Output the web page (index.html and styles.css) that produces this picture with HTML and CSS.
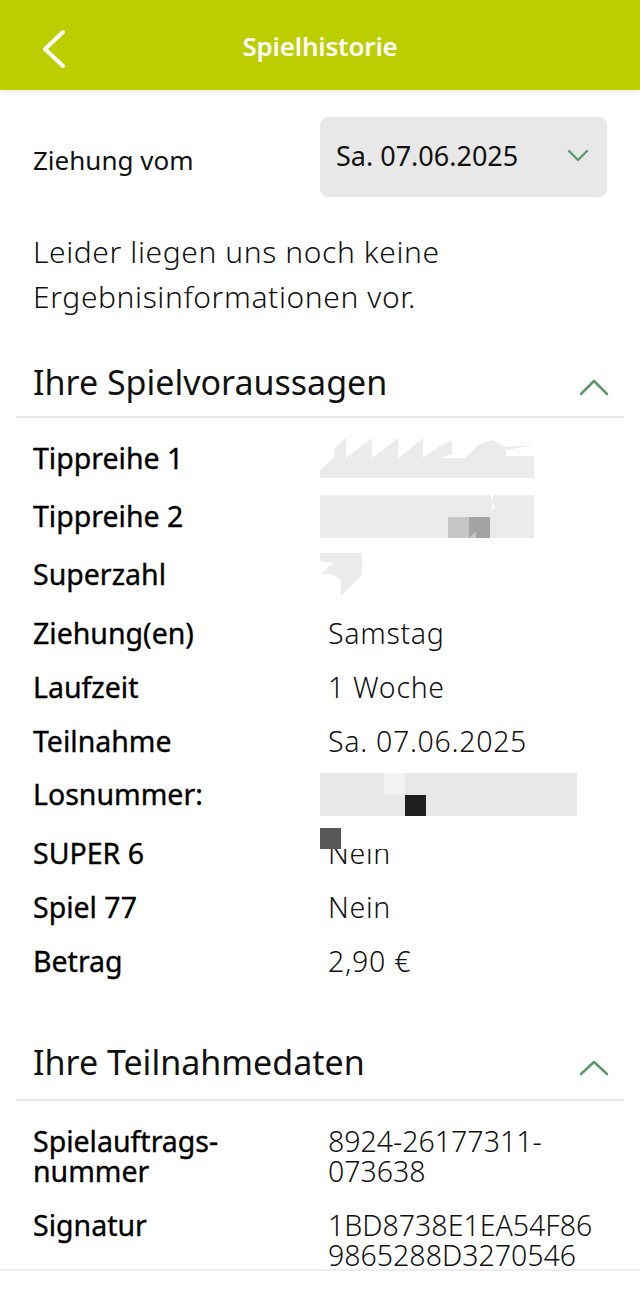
FILE: index.html
```html
<!DOCTYPE html>
<html lang="de">
<head>
<meta charset="utf-8">
<title>Spielhistorie</title>
<link rel="stylesheet" href="styles.css">
</head>
<body>
<header class="appbar">
  <svg class="back" width="40" height="50" viewBox="0 0 40 50"><polyline points="28,7 10,24 28,41" fill="none" stroke="#fff" stroke-width="4" stroke-linecap="round" stroke-linejoin="round"/></svg>
  <h1 class="title">Spielhistorie</h1>
</header>
<main class="content">
  <div class="draw-row">
    <span class="draw-label">Ziehung vom</span>
    <div class="select">
      <span class="select-text">Sa. 07.06.2025</span>
      <svg class="select-chev" width="22" height="14" viewBox="0 0 22 14"><polyline points="2,2 11,11 20,2" fill="none" stroke="#5b9a6b" stroke-width="2.4" stroke-linecap="round" stroke-linejoin="round"/></svg>
    </div>
  </div>
  <p class="notice">Leider liegen uns noch keine Ergebnisinformationen vor.</p>

  <section class="section">
    <div class="section-head">
      <h2 class="section-title">Ihre Spielvoraussagen</h2>
      <svg class="section-chev" width="30" height="18" viewBox="0 0 30 18"><polyline points="2,15 15,2 28,15" fill="none" stroke="#5b9a6b" stroke-width="2.6" stroke-linecap="round" stroke-linejoin="round"/></svg>
    </div>
    <div class="grid">
      <div class="row tall">
        <span class="label">Tippreihe 1</span>
        <span class="value redact">
          <svg width="214" height="40" viewBox="0 0 214 40"><path fill="#ebebeb" d="M0,40 L0,32 L14,20 L14,11 L26,0 L26,20 L38,11 L52,0 L52,20 L64,11 L78,0 L78,20 L90,11 L103,0 L103,20 L115,11 L132,2 L132,16 L120,20 L145,20 L160,6 L172,2 L186,9 L214,7 L186,12 L186,18 L214,18 L214,40 Z"/></svg>
        </span>
      </div>
      <div class="row tall">
        <span class="label">Tippreihe 2</span>
        <span class="value redact">
          <svg width="214" height="43" viewBox="0 0 214 43"><rect width="214" height="43" fill="#ebebeb"/><path fill="#fff" d="M170,0 L175,12 L172,16 L173,0 Z"/><rect x="128" y="22" width="21" height="21" fill="#c6c6c6"/><rect x="149" y="22" width="21" height="21" fill="#a3a3a3"/><path fill="#c6c6c6" d="M149,43 L156,36 L156,43 Z"/></svg>
        </span>
      </div>
      <div class="row tall">
        <span class="label">Superzahl</span>
        <span class="value redact">
          <svg width="43" height="43" viewBox="0 0 43 43"><path fill="#ebebeb" d="M0,0 L42,0 L42,22 L21,43 L21,27 L12,21 L0,21 L14,10 L0,8 Z"/></svg>
        </span>
      </div>
      <div class="row">
        <span class="label">Ziehung(en)</span>
        <span class="value">Samstag</span>
      </div>
      <div class="row">
        <span class="label">Laufzeit</span>
        <span class="value">1 Woche</span>
      </div>
      <div class="row">
        <span class="label">Teilnahme</span>
        <span class="value">Sa. 07.06.2025</span>
      </div>
      <div class="row tall">
        <span class="label">Losnummer:</span>
        <span class="value redact">
          <svg width="257" height="43" viewBox="0 0 257 43"><rect width="257" height="43" fill="#e8e8e8"/><rect x="64" y="0" width="21" height="21" fill="#f3f3f3"/><rect x="85" y="22" width="21" height="21" fill="#1e1e1e"/></svg>
        </span>
      </div>
      <div class="row">
        <span class="label">SUPER 6</span>
        <span class="value covered">Nein<span class="cover"></span><span class="cover-dark"></span></span>
      </div>
      <div class="row">
        <span class="label">Spiel 77</span>
        <span class="value">Nein</span>
      </div>
      <div class="row">
        <span class="label">Betrag</span>
        <span class="value">2,90 €</span>
      </div>
    </div>
  </section>

  <section class="section second">
    <div class="section-head">
      <h2 class="section-title">Ihre Teilnahmedaten</h2>
      <svg class="section-chev" width="30" height="18" viewBox="0 0 30 18"><polyline points="2,15 15,3 28,15" fill="none" stroke="#5b9a6b" stroke-width="2.6" stroke-linecap="round" stroke-linejoin="round"/></svg>
    </div>
    <div class="grid data">
      <div class="row multi">
        <span class="label">Spielauftrags-<br>nummer</span>
        <span class="value mono">8924-26177311-<br>073638</span>
      </div>
      <div class="row multi">
        <span class="label">Signatur</span>
        <span class="value mono">1BD8738E1EA54F86<br>9865288D3270546</span>
      </div>
    </div>
  </section>
</main>
<div class="bottom-line"></div>
</body>
</html>
```
FILE: styles.css
```css
* { box-sizing: border-box; }
html, body { margin: 0; padding: 0; background: #fff; }
body {
  width: 640px;
  height: 1294px;
  overflow: hidden;
  font-family: "Noto Sans", "Open Sans", sans-serif;
  color: #111;
}
.appbar {
  height: 90px;
  background: #bccd00;
  position: relative;
  display: flex;
  align-items: center;
  justify-content: center;
  box-shadow: 0 3px 4px rgba(0,0,0,0.08);
}
.back {
  position: absolute;
  left: 35px;
  top: 25px;
}
.title {
  margin: 0 0 -2px;
  color: #fff;
  font-size: 26px;
  font-weight: 600;
  letter-spacing: -0.2px;
}
.content { padding: 0 16px; }
.draw-row {
  display: flex;
  align-items: center;
  margin-top: 27px;
  padding-left: 17px;
}
.draw-label {
  width: 287px;
  font-size: 26px;
  font-weight: 400;
  margin-top: 6px;
}
.select {
  width: 287px;
  height: 80px;
  background: #e8e8e8;
  border-radius: 8px;
  display: flex;
  align-items: center;
  justify-content: space-between;
  padding: 0 18px 0 16px;
}
.select-text {
  font-size: 27px;
  font-weight: 400;
  margin-top: -4px;
}
.select-chev { margin-top: -2px; }
.notice {
  margin: 32px 0 0;
  padding-left: 17px;
  font-size: 30px;
  line-height: 45px;
  font-weight: 300;
  letter-spacing: 0.6px;
  max-width: 500px;
}
.section-head {
  display: flex;
  justify-content: space-between;
  align-items: flex-end;
  border-bottom: 2px solid #e8e8e8;
  margin-top: 41px;
  padding: 0 15px 12px 17px;
}
.section-title {
  margin: 0;
  font-size: 34px;
  line-height: 44px;
  font-weight: 400;
}
.section-chev { margin-bottom: 7px; }
.second .section-head { margin-top: 55px; padding-bottom: 15px; }
.grid {
  display: flex;
  flex-direction: column;
  padding: 11px 0 0 17px;
}
.row {
  display: grid;
  grid-template-columns: 287px 1fr;
  align-items: center;
  height: 54px;
  padding-top: 5px;
}
.row.tall { height: 58px; padding-top: 0; }
.label {
  font-size: 28.5px;
  font-weight: 400;
  color: #000;
  -webkit-text-stroke: 0.35px #000;
}
.value {
  font-size: 28.5px;
  font-weight: 300;
  letter-spacing: 0.7px;
  padding-left: 8px;
  position: relative;
}
.value.mono { letter-spacing: 0; }
.value.redact { padding-left: 0; display: flex; align-items: center; }
.value.redact svg { display: block; }
.cover {
  position: absolute;
  left: 0;
  top: 0;
  width: 90px;
  height: 15px;
  background: #fff;
}
.cover-dark {
  position: absolute;
  left: 0;
  top: -6px;
  width: 21px;
  height: 21px;
  background: #575757;
}
.data { padding-top: 25px; }
.row.multi {
  height: auto;
  align-items: start;
  padding: 0 0 24px;
}
.multi .label, .multi .value { line-height: 30px; }
.bottom-line {
  position: absolute;
  left: 0;
  top: 1269px;
  width: 640px;
  height: 2px;
  background: #ededed;
}
```
